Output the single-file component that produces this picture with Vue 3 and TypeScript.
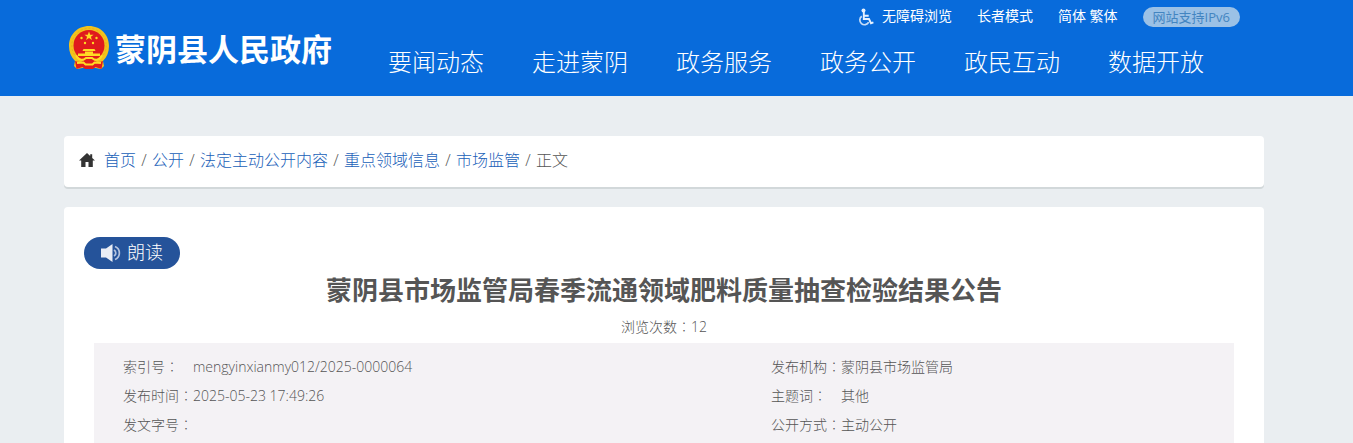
<script setup lang="ts">
interface InfoItem {
  label: string
  value: string
}

const navItems: string[] = ['要闻动态', '走进蒙阴', '政务服务', '政务公开', '政民互动', '数据开放']
const crumbs: string[] = ['首页', '公开', '法定主动公开内容', '重点领域信息', '市场监管']
const infoRows: InfoItem[][] = [
  [
    { label: '索引号', value: 'mengyinxianmy012/2025-0000064' },
    { label: '发布机构', value: '蒙阴县市场监管局' },
  ],
  [
    { label: '发布时间', value: '2025-05-23 17:49:26' },
    { label: '主题词', value: '其他' },
  ],
  [
    { label: '发文字号', value: '' },
    { label: '公开方式', value: '主动公开' },
  ],
]
</script>

<template>
  <div class="page">
    <header class="header">
      <div class="container header-inner">
        <a class="brand" href="#">
          <svg class="emblem" viewBox="0 0 40 44" aria-hidden="true">
            <path fill="#f3c21c" d="M20 0C8.500 0 0 8.700 0 20c0 6 2 11 6 15l-1 5 3 3 8-1.500h8l8 1.500 3-3-1-5c4-4 6-9 6-15C40 8.700 31.500 0 20 0Z" />
            <circle cx="20" cy="19.500" r="17.200" fill="none" stroke="#e8b018" stroke-width="1" stroke-dasharray="2 2" />
            <circle cx="20" cy="19.500" r="15.500" fill="#e01b1d" />
            <path fill="#ffdb24" d="m20 5.500 1.200 3.200h3.400l-2.700 2.100 1 3.300-2.900-2-2.900 2 1-3.300-2.700-2.100h3.400Z" />
            <g fill="#ffdb24">
              <circle cx="12.500" cy="12" r="1.200" />
              <circle cx="27.500" cy="12" r="1.200" />
              <circle cx="16" cy="17" r="1.200" />
              <circle cx="24" cy="17" r="1.200" />
              <path d="M14.500 23h11l1 2h-13Zm1.500 2.500h8V28h-8ZM9 27.500h22V30H9Z" />
            </g>
            <path fill="#e01b1d" d="M6 35c4 2 8 1 10-1.500h8c2 2.500 6 3.500 10 1.500l-1.500 8-6-2-2.500 2h-8l-2.500-2-6 2Z" />
            <path fill="none" stroke="#ffdb24" stroke-width="2" d="M7 29.500c2.500 5 7 5.500 10 2.500h6c3 3 7.500 2.500 10-2.500M8 37l6.500-.5 2 2h7l2-2 6.500.5" />
          </svg>
          <span class="brand-name">蒙阴县人民政府</span>
        </a>
        <div class="header-main">
          <div class="tools">
            <svg class="wheelchair" viewBox="0 0 16 18" aria-hidden="true">
              <circle cx="5.500" cy="2.500" r="2" fill="#e6f1ff" />
              <path fill="none" stroke="#e6f1ff" stroke-width="1.900" d="M5.800 4v7h5.200l2 4.200 2.400-.9M6 7.700h4.700" />
              <path fill="none" stroke="#c5dcf7" stroke-width="1.700" d="M3.800 8.200A4.700 4.700 0 1 0 10.700 14.200" />
            </svg>
            <a class="access" href="#">无障碍浏览</a>
            <a class="elder" href="#">长者模式</a>
            <span class="langs"><a href="#">简体</a> <a href="#">繁体</a></span>
            <span class="ipv6">网站支持IPv6</span>
          </div>
          <nav class="nav">
            <a v-for="item in navItems" :key="item" href="#">{{ item }}</a>
          </nav>
        </div>
      </div>
    </header>

    <main class="main">
      <div class="container">
        <nav class="breadcrumb" aria-label="当前位置">
          <svg class="home" viewBox="0 0 16 14" aria-hidden="true">
            <path fill="#333" d="M8 0 0 7.600h2.200V14h4.300V9h3v5h4.300V7.600H16L13.200 5V1.300h-2V3Z" />
          </svg>
          <template v-for="crumb in crumbs" :key="crumb">
            <a href="#">{{ crumb }}</a><span class="slash">/</span>
          </template>
          <span class="current">正文</span>
        </nav>

        <article class="card">
          <button class="read" type="button">
            <svg viewBox="0 0 20 18" aria-hidden="true">
              <path fill="#e9edf5" d="M0 4.500h5L11.500 0v18L5 13.500H0Z" />
              <path fill="none" stroke="#b5c4de" stroke-width="1.700" d="M13 6c2.400 1.500 2.400 4.500 0 6M14 2.500c5.800 2.500 5.800 10.500 0 13" />
            </svg>
            <span>朗读</span>
          </button>
          <h1>蒙阴县市场监管局春季流通领域肥料质量抽查检验结果公告</h1>
          <p class="views">浏览次数<span class="colon">：</span>12</p>
          <table class="info">
            <tbody>
              <tr v-for="(row, index) in infoRows" :key="index">
                <template v-for="item in row" :key="item.label">
                  <th scope="row">{{ item.label }}<span class="colon">：</span></th>
                  <td>{{ item.value }}</td>
                </template>
              </tr>
            </tbody>
          </table>
        </article>
      </div>
    </main>
  </div>
</template>

<style>
body {
  margin: 0;
  background: #eaeef1;
}
</style>

<style scoped>
.page {
  font-family: "Open Sans", "Noto Sans CJK SC", sans-serif;
  font-weight: 300;
  color: #555;
}

a {
  color: inherit;
  text-decoration: none;
}

.header {
  background: #086bdb;
  color: #fff;
}

.header,
.main {
  padding-right: 25px;
}

.container {
  max-width: 1200px;
  margin: 0 auto;
}

.header-inner {
  display: flex;
  height: 96px;
}

.brand {
  display: flex;
  align-items: center;
  gap: 6px;
  flex: none;
  width: 319px;
  padding-left: 5px;
}

.emblem {
  width: 40px;
  height: 44px;
}

.brand-name {
  font-family: "Noto Sans CJK SC", sans-serif;
  font-size: 31px;
  line-height: 40px;
  font-weight: 700;
  white-space: nowrap;
}

.header-main {
  flex: 1;
  min-width: 0;
}

.tools {
  display: flex;
  align-items: center;
  justify-content: flex-end;
  height: 34px;
  padding-right: 24px;
  font-size: 14px;
  line-height: 20px;
  font-weight: 400;
  white-space: nowrap;
}

.wheelchair {
  width: 16px;
  height: 18px;
  margin-right: 8px;
}

.access,
.elder,
.langs {
  padding-bottom: 2px;
}

.elder,
.langs,
.ipv6 {
  margin-left: 25px;
}

.ipv6 {
  padding: 0 10px;
  border-radius: 10px;
  background: #9bc1e6;
  color: #4385c1;
  font-size: 13px;
  line-height: 20px;
}

.nav {
  display: flex;
  gap: 48px;
  font-size: 24px;
  line-height: 56px;
  white-space: nowrap;
}

.breadcrumb {
  display: flex;
  align-items: center;
  margin-top: 40px;
  padding: 0 15px 3px;
  border-radius: 4px;
  background: #fff;
  box-shadow: 0 2px 0 #d2d8da;
  font-size: 16px;
  line-height: 48px;
}

.breadcrumb a {
  color: #2060b8;
}

.home {
  width: 16px;
  height: 14px;
  margin-right: 9px;
}

.slash {
  width: 16px;
  text-align: center;
}

.card {
  margin-top: 20px;
  padding: 30px 30px 0;
  border-radius: 4px;
  background: #fff;
}

.read {
  display: flex;
  align-items: center;
  justify-content: center;
  gap: 6px;
  width: 96px;
  height: 32px;
  margin-left: -10px;
  padding: 0;
  border: 0;
  border-radius: 16px;
  background: #25539a;
  color: #fff;
  font-family: inherit;
  font-size: 18px;
  font-weight: 300;
  line-height: 28px;
}

.read svg {
  width: 20px;
  height: 18px;
}

.read span {
  padding-bottom: 2px;
}

h1 {
  margin: 0;
  font-size: 26px;
  line-height: 42px;
  font-weight: 700;
  text-align: center;
}

.views {
  margin: 0;
  font-size: 14px;
  line-height: 32px;
  text-align: center;
}

.colon {
  font-family: "Noto Sans CJK TC", sans-serif;
  font-weight: 100;
  line-height: 1;
}

.info {
  width: 100%;
  table-layout: fixed;
  border-collapse: separate;
  border-spacing: 0;
  padding: 9px 0 11px 29px;
  background: #f4f2f5;
  font-size: 14px;
  line-height: 29px;
}

.info th,
.info td {
  padding: 0;
  font-weight: 300;
  text-align: left;
  white-space: nowrap;
}

.info th {
  width: 70px;
}

.info td:nth-child(2) {
  width: 578px;
}
</style>
